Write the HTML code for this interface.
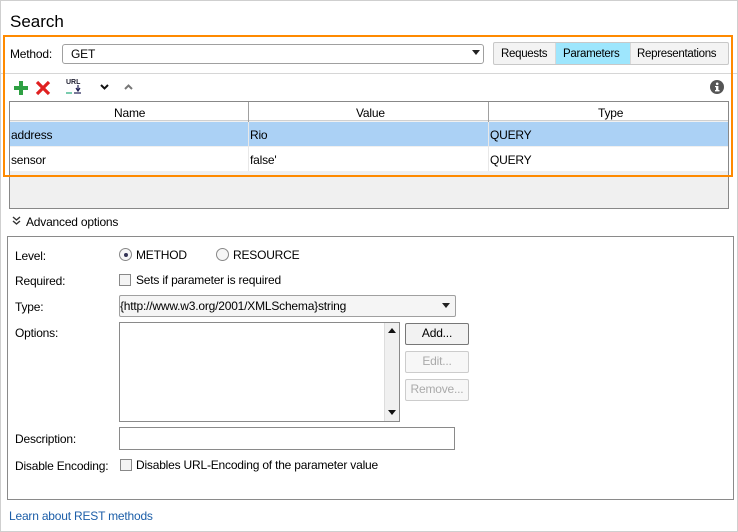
<!DOCTYPE html>
<html><head><style>
*{box-sizing:border-box;margin:0;padding:0}
body{width:738px;height:532px;background:#fff;font-family:"Liberation Sans",sans-serif;font-size:12px;letter-spacing:-0.2px;color:#000;position:relative;overflow:hidden}
.a{position:absolute}
.t{position:absolute;white-space:nowrap;line-height:14px}
.cb{position:absolute;width:12px;height:12px;border:1px solid #888;background:#f4f4f4}
.rd{position:absolute;width:13px;height:13px;border:1px solid #888;border-radius:50%;background:#f6f6f6}
.btn{position:absolute;border:1px solid #adadad;background:#f2f2f2;text-align:center;line-height:19px;border-radius:2px}
</style></head><body>
<div class="a" style="left:0;top:0;width:738px;height:532px;border:1px solid #cfcfcf"></div>
<div class="t" style="left:10px;top:12px;font-size:17px;line-height:20px;letter-spacing:0">Search</div>

<div class="a" style="left:1px;top:73px;width:736px;height:1px;background:#d6d6d6"></div>

<div class="t" style="left:10px;top:47px">Method:</div>
<div class="a" style="left:62px;top:44px;width:422px;height:20px;border:1px solid #a0a0a0;border-radius:3px;background:#fff"></div>
<div class="t" style="left:71px;top:47px">GET</div>
<svg class="a" style="left:472px;top:50px" width="8" height="5"><path d="M0 0H8L4 5Z" fill="#222"/></svg>

<div class="a" style="left:493px;top:42px;width:236px;height:23px;border:1px solid #c8c8c8;background:#f3f3f3;border-radius:2px"></div>
<div class="a" style="left:556px;top:43px;width:74px;height:21px;background:#9ee6fd"></div>
<div class="a" style="left:555px;top:43px;width:1px;height:21px;background:#d8d8d8"></div>
<div class="a" style="left:630px;top:43px;width:1px;height:21px;background:#d8d8d8"></div>
<div class="t" style="left:501px;top:47px;font-size:11.5px;letter-spacing:-0.3px">Requests</div>
<div class="t" style="left:563px;top:47px;font-size:11.5px;letter-spacing:-0.3px">Parameters</div>
<div class="t" style="left:637px;top:47px;font-size:11.5px;letter-spacing:-0.3px">Representations</div>

<svg class="a" style="left:13px;top:80px" width="16" height="16"><path d="M6 1h4v5h5v4h-5v5H6v-5H1V6h5z" fill="#2ea043"/></svg>
<svg class="a" style="left:35px;top:80px" width="16" height="16"><path d="M2 2L14 14M14 2L2 14" stroke="#e02020" stroke-width="3.2"/></svg>
<div class="t" style="left:66px;top:79px;font-size:7px;line-height:8px;font-weight:bold;color:#223;letter-spacing:0">URL</div>
<svg class="a" style="left:66px;top:85px" width="18" height="10"><path d="M0 8h6" stroke="#2a7" stroke-width="1.2"/><path d="M8 8h7" stroke="#225" stroke-width="1.2"/><path d="M12 0v5M10 3l2 3 2-3" stroke="#225" fill="none" stroke-width="1.2"/></svg>
<svg class="a" style="left:100px;top:84px" width="9" height="6"><path d="M1 1l3.5 3.5L8 1" stroke="#111" stroke-width="2" fill="none"/></svg>
<svg class="a" style="left:124px;top:84px" width="9" height="6"><path d="M1 5l3.5-3.5L8 5" stroke="#777" stroke-width="2" fill="none"/></svg>
<svg class="a" style="left:710px;top:80px" width="14" height="14"><circle cx="7" cy="7" r="7" fill="#555"/><rect x="6" y="6" width="2.4" height="5" fill="#fff"/><rect x="5" y="10" width="4.5" height="1.4" fill="#fff"/><rect x="5" y="6" width="2" height="1.2" fill="#fff"/><circle cx="7.2" cy="3.8" r="1.3" fill="#fff"/></svg>

<div class="a" style="left:9px;top:101px;width:720px;height:108px;border:1px solid #888;background:#f0f0f0"></div>
<div class="a" style="left:10px;top:102px;width:718px;height:19px;background:#fff;border-bottom:1px solid #d0d0d0"></div>
<div class="a" style="left:10px;top:122px;width:718px;height:24px;background:#abd1f5"></div>
<div class="a" style="left:10px;top:147px;width:718px;height:24px;background:#fff"></div>
<div class="a" style="left:248px;top:102px;width:1px;height:69px;background:#a0a0a0"></div>
<div class="a" style="left:488px;top:102px;width:1px;height:69px;background:#a0a0a0"></div>
<div class="a" style="left:248px;top:122px;width:1px;height:49px;background:#e8e8e8"></div>
<div class="a" style="left:488px;top:122px;width:1px;height:49px;background:#e8e8e8"></div>
<div class="t" style="left:114px;top:106px">Name</div>
<div class="t" style="left:356px;top:106px">Value</div>
<div class="t" style="left:598px;top:106px">Type</div>
<div class="t" style="left:11px;top:128px">address</div>
<div class="t" style="left:250px;top:128px">Rio</div>
<div class="t" style="left:490px;top:128px">QUERY</div>
<div class="t" style="left:11px;top:153px">sensor</div>
<div class="t" style="left:250px;top:153px">false'</div>
<div class="t" style="left:490px;top:153px">QUERY</div>

<div class="a" style="left:3px;top:35px;width:730px;height:142px;border:2px solid #ff8a00"></div>

<svg class="a" style="left:12px;top:216px" width="9" height="9"><path d="M1 1l3.5 3 3.5-3M1 5l3.5 3 3.5-3" stroke="#333" stroke-width="1.4" fill="none"/></svg>
<div class="t" style="left:26px;top:215px">Advanced options</div>
<div class="a" style="left:7px;top:236px;width:727px;height:264px;border:1px solid #8a8a8a"></div>

<div class="t" style="left:15px;top:249px">Level:</div>
<div class="rd" style="left:119px;top:248px"></div><div class="a" style="left:124px;top:253px;width:4px;height:4px;border-radius:50%;background:#335"></div>
<div class="t" style="left:136px;top:248px">METHOD</div>
<div class="rd" style="left:216px;top:248px"></div>
<div class="t" style="left:233px;top:248px">RESOURCE</div>

<div class="t" style="left:15px;top:274px">Required:</div>
<div class="cb" style="left:119px;top:274px"></div>
<div class="t" style="left:136px;top:273px">Sets if parameter is required</div>

<div class="t" style="left:15px;top:300px">Type:</div>
<div class="a" style="left:119px;top:295px;width:337px;height:22px;border:1px solid #a0a0a0;border-radius:2px;background:#f5f5f5"></div>
<div class="t" style="left:120px;top:299px">{http://www.w3.org/2001/XMLSchema}string</div>
<svg class="a" style="left:442px;top:303px" width="8" height="5"><path d="M0 0H8L4 5Z" fill="#222"/></svg>

<div class="t" style="left:15px;top:326px">Options:</div>
<div class="a" style="left:119px;top:322px;width:281px;height:100px;border:1px solid #8a8a8a;background:#fff"></div>
<div class="a" style="left:384px;top:323px;width:15px;height:98px;background:#f0f0f0;border-left:1px solid #ddd"></div>
<svg class="a" style="left:388px;top:328px" width="8" height="5"><path d="M0 5H8L4 0Z" fill="#111"/></svg>
<svg class="a" style="left:388px;top:410px" width="8" height="5"><path d="M0 0H8L4 5Z" fill="#111"/></svg>
<div class="btn" style="left:405px;top:323px;width:64px;height:22px;border-color:#777">Add...</div>
<div class="btn" style="left:405px;top:351px;width:64px;height:22px;color:#aaa;border-color:#ccc;background:#f7f7f7">Edit...</div>
<div class="btn" style="left:405px;top:379px;width:64px;height:22px;color:#aaa;border-color:#ccc;background:#f7f7f7">Remove...</div>

<div class="t" style="left:15px;top:432px">Description:</div>
<div class="a" style="left:119px;top:427px;width:336px;height:23px;border:1px solid #8a8a8a;background:#fff"></div>

<div class="t" style="left:15px;top:459px">Disable Encoding:</div>
<div class="cb" style="left:120px;top:459px"></div>
<div class="t" style="left:136px;top:458px">Disables URL-Encoding of the parameter value</div>

<div class="t" style="left:9px;top:509px;color:#1c5ea8">Learn about REST methods</div>
</body></html>
